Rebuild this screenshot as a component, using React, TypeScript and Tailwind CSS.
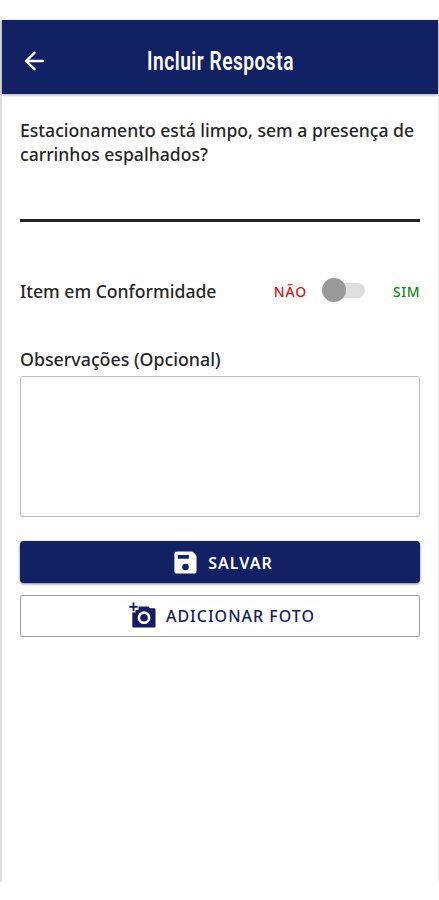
import { useState } from "react";

const BackIcon = () => (
  <svg width="20" height="20" viewBox="0 0 20 20" fill="none" stroke="currentColor" strokeWidth="2.4" strokeLinecap="round" strokeLinejoin="round">
    <path d="M10.5 1.8 2 10l8.500 8.200M2 10h16.800" />
  </svg>
);

const SaveIcon = () => (
  <svg width="23" height="23" viewBox="0 0 23 23">
    <path
      fill="currentColor"
      fillRule="evenodd"
      d="M3 .5h14.500q1 0 1.700.7l2.600 2.600q.7.700.7 1.700V20a2.600 2.600 0 0 1-2.600 2.600H3A2.600 2.600 0 0 1 .4 20V3.100A2.600 2.600 0 0 1 3 .5ZM3.800 4v3.700h11V4ZM11.500 12.700a3.300 3.300 0 1 0 0 6.600 3.300 3.300 0 0 0 0-6.600Z"
    />
  </svg>
);

const AddPhotoIcon = () => (
  <svg width="27" height="26" viewBox="0 0 27 26" className="-mt-0.5">
    <path
      fill="currentColor"
      fillRule="evenodd"
      d="M9.500 6.500V4.500h10L21 6.300h4.200a1.300 1.300 0 0 1 1.300 1.300v16.600a1.300 1.300 0 0 1-1.300 1.300H4.600a1.300 1.300 0 0 1-1.300-1.300V10.500h3.200v-2.500h3ZM15 9.300a6.400 6.400 0 1 0 0 12.800 6.400 6.400 0 0 0 0-12.800Z"
    />
    <circle cx="15" cy="15.700" r="3.800" fill="currentColor" />
    <path d="M4.500 .6v8.400M.3 4.800h8.400" stroke="currentColor" strokeWidth="1.8" />
  </svg>
);

const App = () => {
  const [conforme, setConforme] = useState(false);

  return (
    <div className="h-[900px] bg-white pt-5 font-['Noto_Sans',sans-serif] text-[#262626]">
      <div className="h-[862px] border-l-2 border-r border-l-[#dedede] border-r-[#ededed]">
        <header className="flex h-[74px] items-center bg-[#122064] pt-2 pl-[22px] text-white shadow-[0_1px_3px_rgba(0,0,0,0.35)]">
          <button type="button" aria-label="Voltar">
            <BackIcon />
          </button>
          <h1 className="ml-[103px] origin-left scale-x-[0.735] font-[Roboto,sans-serif] text-[26px] leading-8 font-semibold tracking-[0.7px] whitespace-nowrap">
            Incluir Resposta
          </h1>
        </header>

        <main className="px-[18px] pt-6">
          <p className="text-[17.600px] leading-6 font-medium whitespace-nowrap">
            Estacionamento está limpo, sem a presença de
            <br />
            carrinhos espalhados?
          </p>
          <hr className="mt-[53px] border-t-[3px] border-[#242428]" />

          <div className="mt-[57px] flex h-6 items-center">
            <span className="text-[17.600px] font-medium">Item em Conformidade</span>
            <div className="ml-auto flex items-center text-[14px] font-medium">
              <span className="mt-px tracking-[0.800px] text-[#d81414]">NÃO</span>
              <button
                type="button"
                role="switch"
                aria-label="Item em Conformidade"
                aria-checked={conforme}
                onClick={() => setConforme(!conforme)}
                className="mr-7 mb-0.5 ml-[15px] flex h-6 w-[43px] items-center"
              >
                <span className="h-[15px] w-full rounded-full bg-[#dedede]">
                  <span className={`-mt-[4.500px] block size-6 rounded-full bg-[#999] ${conforme ? "ml-auto" : ""}`} />
                </span>
              </button>
              <span className="tracking-[0.500px] text-[#138a13]">SIM</span>
            </div>
          </div>

          <label htmlFor="observacoes" className="mt-11 block text-[17.800px] leading-6 font-medium">
            Observações (Opcional)
          </label>
          <textarea
            id="observacoes"
            className="mt-[5px] block h-[141px] w-full resize-none rounded-[3px] border border-[#bebebe] p-2 outline-none"
          />

          <button
            type="button"
            className="mt-6 flex h-[42px] w-full items-center justify-center gap-[11px] rounded-[4px] bg-[#122064] pl-[7px] text-[16px] font-semibold tracking-[1px] text-white shadow-[0_1px_3px_rgba(0,0,0,0.5)]"
          >
            <SaveIcon />
            <span className="mt-px">SALVAR</span>
          </button>
          <button
            type="button"
            className="mt-3 flex h-[42px] w-full items-center justify-center gap-2.5 rounded-[3px] border border-[#9a9cba] pl-1 text-[16px] font-medium tracking-[1px] text-[#171c62]"
          >
            <AddPhotoIcon />
            <span>ADICIONAR FOTO</span>
          </button>
        </main>
      </div>
    </div>
  );
};

export default App;
